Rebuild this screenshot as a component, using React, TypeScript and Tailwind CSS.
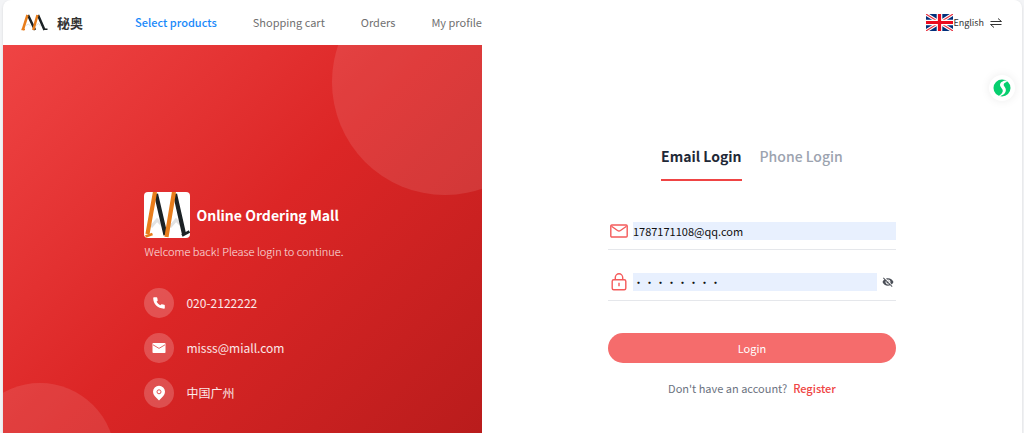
import { useState } from "react";
import type { ReactNode } from "react";

type LoginMode = "email" | "phone";

const NAV_ITEMS = ["Select products", "Shopping cart", "Orders", "My profile"];

function LogoMark({ className }: { className: string }) {
    return (
        <svg viewBox="0 0 54 34" preserveAspectRatio="none" className={className} aria-hidden="true">
            <path d="M14 2 28 32M34 2 47 32" stroke="#1c2225" strokeWidth="5" fill="none" />
            <path d="M45 30.500H53" stroke="#1c2225" strokeWidth="3" />
            <path d="M13 2 3.500 32M33 2 24.500 32" stroke="#e87d1c" strokeWidth="5" fill="none" />
            <path d="M1 31H8" stroke="#e87d1c" strokeWidth="3" />
            <path d="M10 23 15 20 20 25M30 23 35 19 40 25" stroke="#d5d5d5" strokeWidth="1.500" fill="none" />
        </svg>
    );
}

function LogoTile() {
    return (
        <svg viewBox="0 0 46 46" className="size-[46px] shrink-0 rounded bg-white" aria-hidden="true">
            <path d="M7 35 13 28 20 35M26 35 32 28 39 35" stroke="#e2e2e2" strokeWidth="3" fill="none" />
            <path d="M12 2 21.500 43M31 2 40 42" stroke="#1c2225" strokeWidth="4.200" fill="none" />
            <path d="M38 43.500 45.500 39.500" stroke="#1c2225" strokeWidth="2.600" />
            <path d="M11 0 3.500 42M30 0 22.500 45" stroke="#e87d1c" strokeWidth="4.200" fill="none" />
            <path d="M1.500 44.500 8.500 42" stroke="#e87d1c" strokeWidth="2.600" />
        </svg>
    );
}

function UkFlag() {
    return (
        <svg viewBox="0 0 27 17" className="h-[17px] w-[27px] shrink-0" aria-hidden="true">
            <rect width="27" height="17" fill="#012f7b" />
            <path d="M0 0 27 17M27 0 0 17" stroke="#fff" strokeWidth="3.400" />
            <path d="M0 0 27 17M27 0 0 17" stroke="#e8303f" strokeWidth="1.100" />
            <path d="M13.500 0V17M0 8.500H27" stroke="#fff" strokeWidth="5.600" />
            <path d="M13.500 0V17M0 8.500H27" stroke="#ea0a1e" strokeWidth="3.200" />
        </svg>
    );
}

function ContactRow({ icon, children }: { icon: ReactNode; children: ReactNode }) {
    return (
        <li className="flex items-center gap-3">
            <span className="flex size-[30px] items-center justify-center rounded-full bg-white/20">{icon}</span>
            <span>{children}</span>
        </li>
    );
}

function BrandPanel() {
    return (
        <section className="relative flex w-[47%] justify-center overflow-hidden bg-linear-[135deg,#ef4444_0%,#dc2626_50%,#b91c1c_100%] pt-[147px] pb-6 text-white">
            <div className="absolute -top-[76px] -right-[76px] size-[226px] rounded-full bg-white/10" />
            <div className="absolute -bottom-[100px] -left-[38px] size-[150px] rounded-full bg-white/10" />
            <div className="relative w-[196px] whitespace-nowrap">
                <div className="flex items-center gap-[6px]">
                    <LogoTile />
                    <h1 className="text-[14px] leading-5 font-bold">Online Ordering Mall</h1>
                </div>
                <p className="mt-[5px] text-[11px] leading-4 font-light text-white/90">
                    Welcome back! Please login to continue.
                </p>
                <ul className="mt-[29px] flex flex-col gap-[15px] text-[12px] leading-5 text-white/90">
                    <ContactRow
                        icon={
                            <svg viewBox="0 0 12 12" className="size-3" fill="#fff" aria-hidden="true">
                                <path d="M1 .3H3.500Q4.200.3 4.300 1L4.700 3.200Q4.800 3.700 4.400 4L3.600 4.800C4.500 6.300 5.700 7.400 7.200 8.300L8.100 7.400Q8.400 7.100 8.900 7.200L11.200 7.800Q11.800 8 11.800 8.600V10.900Q11.800 11.700 11 11.700C4.500 11.500.3 7.200.2 1.100Q.2.3 1 .3Z" />
                            </svg>
                        }
                    >
                        020-2122222
                    </ContactRow>
                    <ContactRow
                        icon={
                            <svg viewBox="0 0 14 12" className="h-3 w-[14px]" aria-hidden="true">
                                <rect x=".5" y="1" width="13" height="10" rx=".8" fill="#fff" />
                                <path d="m1 2.800 6 3.600 6-3.600" stroke="#e15555" strokeWidth=".9" fill="none" />
                            </svg>
                        }
                    >
                        misss@miall.com
                    </ContactRow>
                    <ContactRow
                        icon={
                            <svg viewBox="0 0 14 16" className="h-4 w-[14px]" aria-hidden="true">
                                <path d="M7 .8A6 6 0 0 0 1 6.800C1 10 3.500 12.200 7 15.400 10.500 12.200 13 10 13 6.800A6 6 0 0 0 7 .8Z" fill="#fff" />
                                <circle cx="7" cy="6.800" r="2" fill="none" stroke="#e15555" strokeWidth="1" />
                            </svg>
                        }
                    >
                        中国广州
                    </ContactRow>
                </ul>
            </div>
        </section>
    );
}

function LoginForm() {
    const [mode, setMode] = useState<LoginMode>("email");
    const [account, setAccount] = useState("1787171108@qq.com");
    const [password, setPassword] = useState("12345678");
    const [visible, setVisible] = useState(false);

    const tabClass = (tab: LoginMode) =>
        tab === mode ? "border-[#ef4444] font-bold text-[#1f2937]" : "border-transparent font-medium text-[#9ca3af]";

    return (
        <section className="flex flex-1 justify-center px-6 pt-[99px] pb-6">
            <form className="w-full max-w-72" onSubmit={(e) => e.preventDefault()}>
                <div className="flex justify-center gap-[18px] text-[14px] leading-6">
                    <button type="button" onClick={() => setMode("email")} className={`border-b-2 pb-[11px] ${tabClass("email")}`}>
                        Email Login
                    </button>
                    <button type="button" onClick={() => setMode("phone")} className={`border-b-2 pb-[11px] ${tabClass("phone")}`}>
                        Phone Login
                    </button>
                </div>

                <div className="mt-8 flex h-[37px] items-center gap-[5px] border-b border-[#e5e7eb] pl-[2px]">
                    <label htmlFor="account" aria-label="Email">
                        <svg viewBox="0 0 18 18" className="size-[18px]" fill="none" stroke="#f45b5b" strokeWidth="1.400" aria-hidden="true">
                            <rect x=".8" y="3" width="16.400" height="12" rx="1" />
                            <path d="m1.500 4.200 6 4.300q1.500 1 3 0l6-4.300" />
                        </svg>
                    </label>
                    <input
                        id="account"
                        type="text"
                        value={account}
                        onChange={(e) => setAccount(e.target.value)}
                        className="h-[18px] min-w-0 flex-1 bg-[#e8f0fe] text-[11px] text-[#111] outline-none"
                    />
                </div>

                <div className="mt-[14px] flex h-[37px] items-center gap-[5px] border-b border-[#e5e7eb] px-[2px]">
                    <label htmlFor="password" aria-label="Password">
                        <svg viewBox="0 0 18 18" className="size-[18px]" fill="none" stroke="#f45b5b" strokeWidth="1.400" aria-hidden="true">
                            <rect x="2.200" y="6.800" width="13.600" height="10" rx="1.500" />
                            <path d="M5.300 6.800V4.500a3.700 3.700 0 0 1 7.400 0v2.300M9 9.800v3.400" />
                        </svg>
                    </label>
                    <input
                        id="password"
                        type={visible ? "text" : "password"}
                        value={password}
                        onChange={(e) => setPassword(e.target.value)}
                        className="h-[18px] min-w-0 flex-1 bg-[#e8f0fe] text-[11px] text-[#111] outline-none"
                    />
                    <button type="button" aria-label="Show password" onClick={() => setVisible((v) => !v)}>
                        <svg viewBox="0 0 24 24" className="size-3" fill="#4b4f57" aria-hidden="true">
                            <path d="M12 7a5 5 0 0 1 4.640 6.830l2.920 2.920A11.820 11.820 0 0 0 22.990 12C21.260 7.610 17 4.500 12 4.500c-1.400 0-2.740.25-3.980.7l2.160 2.160C10.740 7.130 11.350 7 12 7zM2 4.270l2.740 2.740A11.800 11.800 0 0 0 1 12c1.730 4.390 6 7.500 11 7.500 1.550 0 3.030-.3 4.380-.84L19.730 22 21 20.730 3.270 3 2 4.270zM12 17a5 5 0 0 1-4.470-7.200l1.550 1.550A3 3 0 0 0 12.650 14.920l1.550 1.550A5 5 0 0 1 12 17zm-.16-7.980 3.150 3.150.02-.16a3 3 0 0 0-3-3l-.17.01z" />
                        </svg>
                    </button>
                </div>

                <button type="submit" className="mt-8 h-[30px] w-full rounded-full bg-[#f56c6c] text-[11px] text-white">
                    Login
                </button>
                <p className="mt-[17px] text-center text-[11px] leading-4 text-[#6b7280]">
                    Don't have an account?
                    <a href="#register" className="ml-[6px] font-medium text-[#ef4444]">
                        Register
                    </a>
                </p>
            </form>
        </section>
    );
}

export default function App() {
    return (
        <div className="flex min-h-screen flex-col bg-[#f3f4f6] pr-[2px] pl-[3px] font-['Noto_Sans_CJK_SC',sans-serif]">
            <div className="relative flex flex-1 flex-col rounded-t-lg bg-white shadow-sm">
                <header className="flex h-[45px] items-center pr-[19px] pl-[18px]">
                    <LogoMark className="h-[17px] w-[27px]" />
                    <span className="ml-[9px] text-[13px] font-bold text-[#333]">秘奥</span>
                    <nav className="ml-[52px] flex gap-9 text-[11px] text-[#707070]">
                        {NAV_ITEMS.map((item, i) => (
                            <a key={item} href="#" className={i === 0 ? "font-medium text-[#1989fa]" : ""}>
                                {item}
                            </a>
                        ))}
                    </nav>
                    <button type="button" className="ml-auto flex items-center text-[9px] text-[#333]">
                        <UkFlag />
                        English
                        <svg viewBox="0 0 14 12" className="ml-[5px] h-3 w-[14px]" fill="none" stroke="#333" strokeWidth="1" aria-hidden="true">
                            <path d="M1.500 4.500H12.500L9 1.500M12.500 7.500H1.500L5 10.500" />
                        </svg>
                    </button>
                </header>
                <main className="flex flex-1">
                    <BrandPanel />
                    <LoginForm />
                </main>
                <button
                    type="button"
                    aria-label="Assistant"
                    className="absolute top-[75px] right-[7px] flex size-[26px] items-center justify-center rounded-full bg-white shadow-[0_0_10px_rgba(0,0,0,0.08)]"
                >
                    <svg viewBox="0 0 18 18" className="size-[18px]" aria-hidden="true">
                        <circle cx="9" cy="9" r="8.500" fill="#06cf6e" />
                        <path d="M12.500 1.500C8 2.200 6 5 7.600 7.800L9.600 10.800C10.400 13.200 8.300 15.300 5.500 17.200 10.800 17 14 13 12.500 9.300L10.800 6.500C10.300 4.800 11.500 3.500 14.200 2.800Z" fill="#fff" />
                    </svg>
                </button>
            </div>
        </div>
    );
}
